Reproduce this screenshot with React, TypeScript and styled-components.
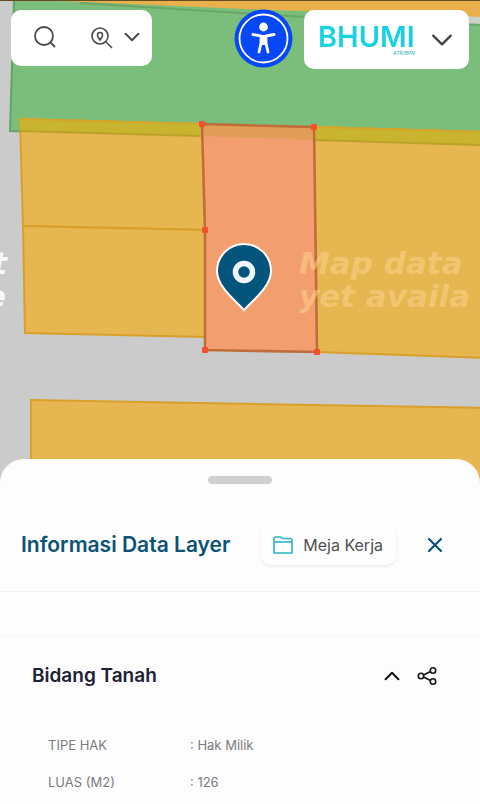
import React from "react";
import styled, { createGlobalStyle } from "styled-components";

const GlobalStyle = createGlobalStyle`
  *, *::before, *::after { box-sizing: border-box; }
  body { margin: 0; background: #fdfdfe; font-family: Inter, "Liberation Sans", sans-serif; }
  button { font: inherit; color: inherit; border: 0; padding: 0; background: none; cursor: pointer; }
  h1, h2, dl, dt, dd { margin: 0; }
  svg { display: block; flex: none; }
`;

const Page = styled.div`
  min-height: 100vh;
  display: flex;
  flex-direction: column;
  overflow: hidden;
`;

const MapArea = styled.section`
  position: relative;
  height: 488px;
  background: #cbcbcb;
`;

const MapCanvas = styled.svg`
  position: absolute;
  inset: 0;
  width: 100%;
  height: 100%;
`;

const Toolbar = styled.header`
  position: relative;
  display: flex;
  align-items: flex-start;
  gap: 11px;
  padding: 10px 11px;
`;

const SearchCard = styled.div`
  display: flex;
  align-items: center;
  justify-content: space-between;
  width: 141px;
  height: 56px;
  margin-right: auto;
  padding: 0 12px 2px 22px;
  border-radius: 10px;
  background: #fff;
  color: #4a4a4c;
`;

const IconButton = styled.button`
  display: flex;
  align-items: center;
  justify-content: center;
  gap: 10px;
`;

const AccessButton = styled(IconButton)`
  width: 59px;
  height: 58px;
  margin-top: -1px;
`;

const BrandButton = styled.button`
  display: flex;
  align-items: center;
  justify-content: space-between;
  width: 165px;
  height: 59px;
  padding: 0 16px 0 14px;
  border-radius: 10px;
  background: #fff;
  color: #414143;
`;

const Brand = styled.span`
  display: flex;
  flex-direction: column;
  align-items: flex-end;
`;

const BrandName = styled.span`
  font-size: 29px;
  line-height: 26px;
  font-weight: 600;
  background: linear-gradient(90deg, #16d5e2, #18cfe6);
  background-clip: text;
  -webkit-background-clip: text;
  color: transparent;
`;

const BrandNote = styled.span`
  font-size: 5px;
  line-height: 6px;
  font-style: italic;
  font-weight: 500;
  color: #3fb9c6;
`;

const Sheet = styled.main`
  position: relative;
  flex: 1;
  margin-top: -29px;
  border-radius: 24px 24px 0 0;
  background: #fdfdfe;
`;

const Handle = styled.div`
  width: 64px;
  height: 8px;
  margin: 0 auto;
  border-radius: 4px;
  background: #cfcfd0;
`;

const SheetTop = styled.div`
  padding-top: 17px;
`;

const SheetHeader = styled.div`
  display: flex;
  align-items: center;
  height: 108px;
  padding: 15px 36px 0 21px;
  border-bottom: 1px solid #f4f4f5;
`;

const Title = styled.h1`
  flex: 1;
  font-size: 21px;
  line-height: 28px;
  font-weight: 600;
  white-space: nowrap;
  color: #0b5275;
`;

const DeskButton = styled.button`
  display: flex;
  align-items: center;
  gap: 10px;
  height: 40px;
  margin-right: 30px;
  padding: 0 13px 0 12px;
  border-radius: 10px;
  font-size: 16px;
  line-height: 20px;
  color: #505054;
  background: #fefefe;
  box-shadow: 0 2px 3px #ededee;
`;

const Spacer = styled.div`
  height: 44px;
  border-bottom: 1px solid #f5f5f6;
`;

const GroupHeader = styled.div`
  display: flex;
  align-items: center;
  justify-content: space-between;
  padding: 24px 43px 24px 32px;
`;

const GroupTitle = styled.h2`
  font-size: 19px;
  line-height: 32px;
  font-weight: 600;
  color: #1c2233;
`;

const Actions = styled.div`
  display: flex;
  align-items: center;
  gap: 17px;
  color: #151515;
`;

const Facts = styled.dl`
  padding: 19px 48px 0;
`;

const Fact = styled.div`
  display: grid;
  grid-template-columns: 142px 1fr;
  padding-bottom: 17px;
  font-size: 13px;
  line-height: 20px;
  color: #7b7b7f;

  &:last-child { padding-bottom: 11px; }
`;

const Chevron = ({ width, up, weight = 2 }: { width: number; up?: boolean; weight?: number }) => (
  <svg width={width} height={width} viewBox="0 0 20 20" fill="none" stroke="currentColor" strokeWidth={weight} strokeLinecap="round" strokeLinejoin="round">
    <path d={up ? "M2 14 10 6l8 8" : "m2 6 8 8 8-8"} />
  </svg>
);

const nodes = [[202, 124], [314, 127], [205, 230], [205, 350], [317, 352]];

const ParcelMap = () => (
  <MapCanvas viewBox="0 0 480 488" preserveAspectRatio="xMinYMin slice" aria-label="Peta bidang tanah">
    <rect width="480" height="488" fill="#cbcbcb" />
    <path d="M14 0H480V145L10 131Z" fill="#7bbe7c" />
    <path d="M14 0 10 131 480 145" fill="none" stroke="#5ca765" strokeWidth="2" />
    <path d="M280 0H480V24L425 22Z" fill="#cbcfc9" />
    <path d="M440 23 480 25" fill="none" stroke="#66a970" strokeWidth="2" />
    <path d="M30 0H480V17L440 15 270 10 85 2Z" fill="#e9b04b" />
    <path d="M80 3 240 13 305 17" fill="none" stroke="#6ba666" strokeWidth="2" />
    <path d="M0 0H480" stroke="#654b24" strokeWidth="2" />
    <g fill="#e6b650" stroke="#d99f2b" strokeWidth="2">
      <path d="M20 119 202 124 205 230 23 226Z" />
      <path d="M23 226 205 230 205 337 25 333Z" />
      <path d="M314 127 490 132 490 358 317 352Z" />
      <path d="M31 400 490 408 490 500 31 500Z" />
    </g>
    <path d="M20 119 202 124 202 136 20 131Z" fill="#c9b42f" />
    <path d="M314 127 480 132 480 145 314 140Z" fill="#c9b42f" />
    <path d="m20 131 182 5M314 140l166 5" stroke="#bca128" strokeWidth="2" />
    <path d="m19 119 183 5M314 127l166 5" stroke="#d5a728" strokeWidth="2" />
    <path d="M202 124 314 127 317 352 205 350 205 230Z" fill="#f39e6e" />
    <path d="M202 124 314 127 314 140 202 136Z" fill="#e09e58" />
    <path d="M202 124 314 127 317 352 205 350 205 230Z" fill="none" stroke="#c06c38" strokeWidth="2.5" />
    <g fontFamily="DejaVu Sans, sans-serif" fontSize="31" fontWeight="700" fontStyle="italic">
      <g fill="#ffd790" fillOpacity="0.5">
        <text x="299" y="274">Map data</text>
        <text x="299" y="307">yet availa</text>
      </g>
      <g fill="#f8f8f8" textAnchor="end">
        <text x="7" y="274">t</text>
        <text x="6" y="307">e</text>
      </g>
    </g>
    <g fill="#f0502b">
      {nodes.map(([x, y]) => (
        <rect key={`${x}-${y}`} x={x - 3} y={y - 3} width="6" height="6" rx="1" />
      ))}
    </g>
    <path d="M244 310C236 301 217 287 217 271A27 27 0 0 1 271 271C271 287 252 301 244 310Z" fill="#04557c" stroke="#fff" strokeWidth="2" />
    <circle cx="244" cy="272" r="8.5" fill="none" stroke="#eef6ff" strokeWidth="5.5" />
  </MapCanvas>
);

const facts = [
  { label: "TIPE HAK", value: "Hak Milik" },
  { label: "LUAS (M2)", value: "126" },
];

export default function App() {
  return (
    <Page>
      <GlobalStyle />
      <MapArea>
        <ParcelMap />
        <Toolbar>
          <SearchCard>
            <IconButton aria-label="Cari">
              <svg width="24" height="24" viewBox="0 0 24 24" fill="none" stroke="currentColor" strokeWidth="1.8">
                <circle cx="11" cy="11" r="9" />
                <path d="m17 17 5 5" />
              </svg>
            </IconButton>
            <IconButton aria-label="Pencarian lokasi">
              <svg width="24" height="24" viewBox="0 0 24 24" fill="none" stroke="currentColor" strokeWidth="1.6">
                <circle cx="10" cy="11" r="8" />
                <path d="m16 17 6 6" />
                <path d="M10 15C9 13 7.5 12 7.5 10a2.5 2.5 0 0 1 5 0c0 2-1.5 3-2.5 5Z" />
              </svg>
              <Chevron width={16} weight={2.4} />
            </IconButton>
          </SearchCard>
          <AccessButton aria-label="Aksesibilitas">
            <svg width="59" height="59" viewBox="0 0 59 59">
              <circle cx="29.5" cy="29.5" r="29" fill="#0647f7" />
              <circle cx="29.5" cy="29.5" r="24" fill="none" stroke="#fff" strokeWidth="1.8" />
              <circle cx="29.5" cy="18" r="4.4" fill="#fff" />
              <path d="M19 25.5 27 27v7L25 43M40 25.5 32 27v7L34 43" fill="none" stroke="#fff" strokeWidth="2.8" strokeLinecap="round" strokeLinejoin="round" />
              <path d="M26 26h7v10h-7Z" fill="#fff" />
            </svg>
          </AccessButton>
          <BrandButton>
            <Brand>
              <BrandName>BHUMI</BrandName>
              <BrandNote>ATR/BPN</BrandNote>
            </Brand>
            <Chevron width={22} />
          </BrandButton>
        </Toolbar>
      </MapArea>
      <Sheet>
        <SheetTop>
          <Handle />
        </SheetTop>
        <SheetHeader>
          <Title>Informasi Data Layer</Title>
          <DeskButton>
            <svg width="20" height="20" viewBox="0 0 20 20" fill="none" stroke="#2bb8c0" strokeWidth="1.6" strokeLinejoin="round">
              <path d="M1 18V3l1-1h5l3 1.5h8l1 1V18Z" />
              <path d="M1 7h18" />
            </svg>
            Meja Kerja
          </DeskButton>
          <IconButton aria-label="Tutup">
            <svg width="18" height="18" viewBox="0 0 18 18" stroke="#0b5275" strokeWidth="2.2" strokeLinecap="round">
              <path d="m3 3 12 12M15 3 3 15" />
            </svg>
          </IconButton>
        </SheetHeader>
        <Spacer />
        <GroupHeader>
          <GroupTitle>Bidang Tanah</GroupTitle>
          <Actions>
            <IconButton aria-label="Ciutkan">
              <Chevron width={16} up weight={2.6} />
            </IconButton>
            <IconButton aria-label="Bagikan">
              <svg width="20" height="20" viewBox="0 0 20 20" fill="none" stroke="currentColor" strokeWidth="1.6">
                <circle cx="4" cy="10" r="2.7" />
                <circle cx="16" cy="4.5" r="2.7" />
                <circle cx="16" cy="15.5" r="2.7" />
                <path d="m6.5 9 7-3.5M6.5 11l7 3.5" />
              </svg>
            </IconButton>
          </Actions>
        </GroupHeader>
        <Facts>
          {facts.map((fact) => (
            <Fact key={fact.label}>
              <dt>{fact.label}</dt>
              <dd>: {fact.value}</dd>
            </Fact>
          ))}
        </Facts>
      </Sheet>
    </Page>
  );
}
